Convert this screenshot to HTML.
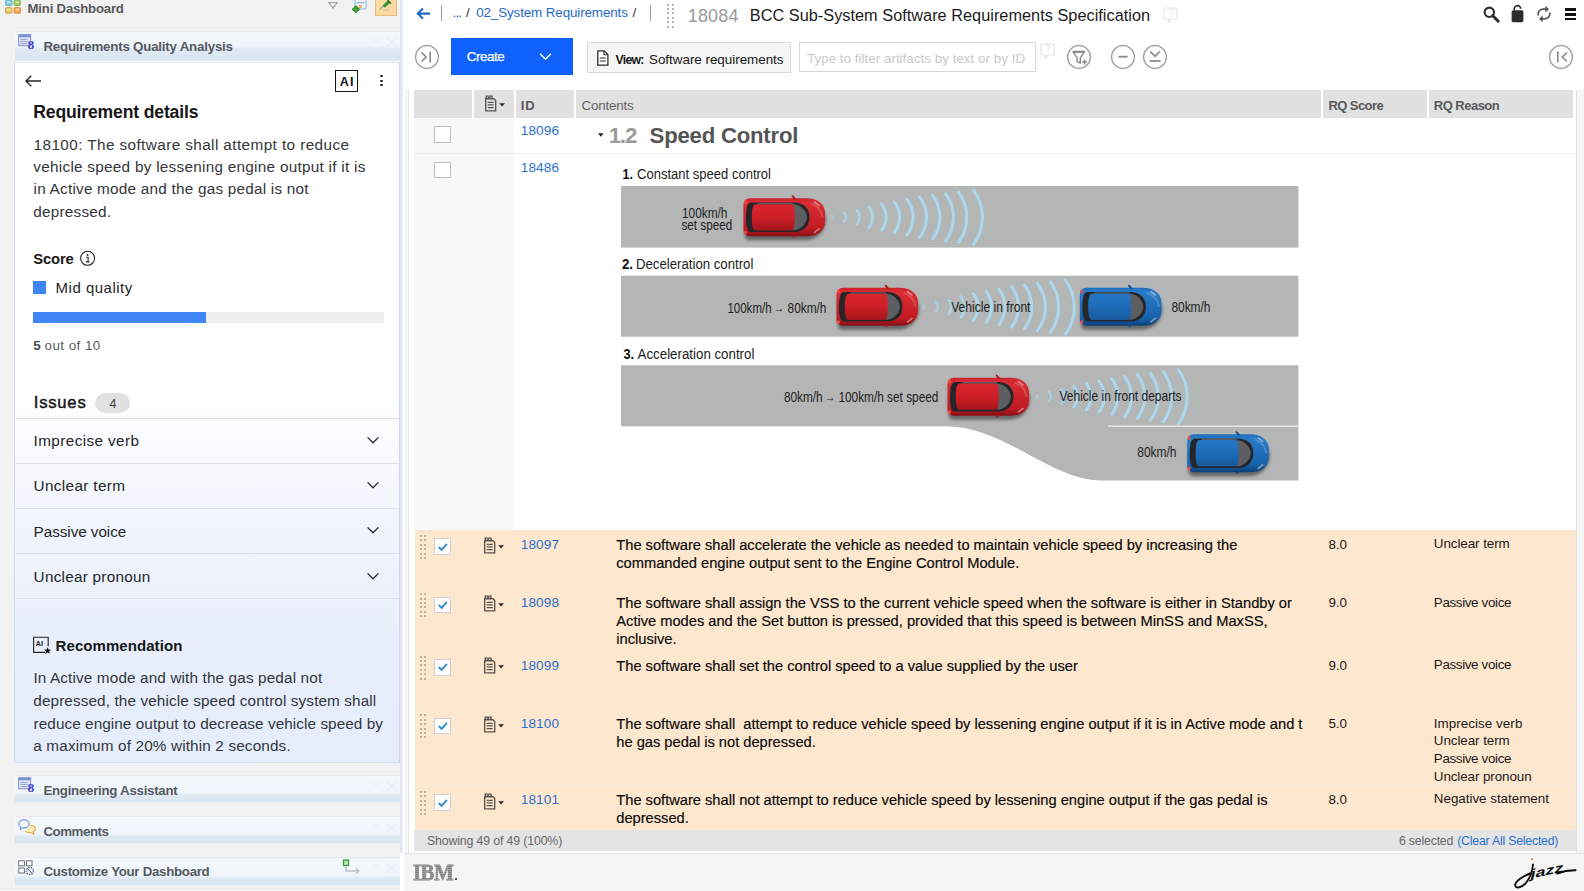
<!DOCTYPE html>
<html lang="en">
<head>
<meta charset="utf-8">
<title>BCC Sub-System Software Requirements Specification</title>
<style>
*{box-sizing:border-box;margin:0;padding:0}
html,body{width:1584px;height:891px;overflow:hidden;background:#fff;font-family:"Liberation Sans",sans-serif;color:#222}
body{position:relative}
.abs{position:absolute}
.t{position:absolute;white-space:pre;line-height:1}
svg{overflow:visible}
#left{position:absolute;left:0;top:0;width:399.600px;height:891px;background:#f2f2f2}
#split{position:absolute;left:399.600px;top:0;width:3.200px;height:853px;background:linear-gradient(90deg,#dbe4f3,#e9eef7)}
.whdr{position:absolute;left:14.500px;width:385.100px;background:linear-gradient(#f3f8fc 0%,#eff5fb 52%,#dfeaf5 60%,#dae6f2 100%);border-top:1px solid #e6eaef;border-bottom:1px solid #e9eef3}
#panel{position:absolute;left:14px;top:62px;width:385.600px;height:700.500px;background:linear-gradient(#fff 0%,#fff 48%,#f3f6fd 62%,#e9effc 82%,#e5ecfb 100%);border:1.100px solid #c9d9f6;border-top:1.500px solid #dfe8f5;border-bottom-color:#d3dff3}
</style>
</head>
<body>
<div id="left"></div>
<div id="split"></div>
<svg class="abs" style="left:5px;top:0px" width="17" height="15" viewBox="0 0 17 15"><rect x="0.5" y="0" width="6.5" height="5.5" rx="1.2" fill="#7cc7d8" stroke="#5fb0c4" stroke-width=".8"/><rect x="9" y="0" width="6.5" height="5.5" rx="1.2" fill="#9ccc5a" stroke="#7fb544" stroke-width=".8"/><rect x="0.5" y="7.5" width="6.5" height="5.8" rx="1.2" fill="#e6c25a" stroke="#cfa53c" stroke-width=".8"/><rect x="9" y="7.5" width="6.5" height="5.8" rx="1.2" fill="#f2a24e" stroke="#de8a35" stroke-width=".8"/><rect x="2" y="1.2" width="3.5" height="2" fill="#fff" opacity=".55"/><rect x="10.5" y="1.2" width="3.5" height="2" fill="#fff" opacity=".55"/><rect x="2" y="8.8" width="3.5" height="2" fill="#fff" opacity=".55"/><rect x="10.5" y="8.8" width="3.5" height="2" fill="#fff" opacity=".55"/></svg>
<div class="t" style="left:27.50px;top:2px;font-size:13.2px;letter-spacing:-0.193px;color:#58595b;font-weight:bold;">Mini Dashboard</div>
<svg class="abs" style="left:326px;top:0" width="16" height="12" viewBox="0 0 16 12"><path d="M2.600 2.700h8.800l-4.400 5.300z" fill="#fafafa" stroke="#a6a6a6" stroke-width="1.250" stroke-linejoin="round"/></svg>
<svg class="abs" style="left:350px;top:0" width="18" height="14" viewBox="0 0 18 14"><rect x="5" y="-2" width="11" height="11" rx="1" fill="#eef4fb" stroke="#8fb0dc" stroke-width="1"/><rect x="6.5" y="2" width="8" height="1.2" fill="#9bb8e0"/><rect x="9" y="5" width="3" height="3" fill="#f0b060"/><path d="M5.900 7.300v4M3.900 9.300h4" stroke="#2f7d22" stroke-width="3.500" stroke-linecap="round"/><path d="M5.900 7.400v3.800M4 9.300h3.800" stroke="#46a632" stroke-width="2.200" stroke-linecap="round"/></svg>
<div class="abs" style="left:375px;top:-1px;width:22px;height:17px;background:#fbd9a0;border:1px solid #e9bd7a"></div>
<svg class="abs" style="left:377px;top:0" width="18" height="14" viewBox="0 0 18 14"><path d="M2.5 9.5l4-3.2" stroke="#9aa" stroke-width="1.2"/><path d="M5.5 5.5l5.5-5 2 2.2-5.2 5z" fill="#3a8f3a"/><path d="M10.5 .2l3.3 3.4" stroke="#2f7a2f" stroke-width="2"/><path d="M6 10.5c2-1 4-1 6 0" stroke="#b9b9b9" stroke-width="1" fill="none"/></svg>
<div class="whdr" style="top:30.5px;height:30px;background:linear-gradient(#f3f8fc 0%,#eff5fb 52%,#dfe9f4 60%,#dae6f2 100%)"></div>
<div class="t" style="left:43.40px;top:40px;font-size:13.3px;letter-spacing:-0.206px;color:#555a60;font-weight:bold;">Requirements Quality Analysis</div>
<svg class="abs" style="left:18px;top:34px" width="18" height="17" viewBox="0 0 18 17"><rect x=".7" y=".7" width="12" height="11" fill="#dfe6f7" stroke="#7d90cf" stroke-width="1"/><rect x=".7" y=".7" width="12" height="2.6" fill="#7d90cf"/><path d="M2.5 5.6h7M2.5 7.6h7M2.5 9.6h7" stroke="#8c9bd2" stroke-width=".9"/><text x="9.6" y="14.6" font-family="Liberation Serif,serif" font-size="13.5" font-weight="bold" fill="#4848cc">8</text></svg>
<svg class="abs" style="left:370px;top:35.5px;opacity:.55" width="28" height="14" viewBox="0 0 28 14"><path d="M2 3h8l-4 4z" fill="#e9eef5"/><path d="M17 2l9 9M26 2l-9 9" stroke="#e6ebf2" stroke-width="2.2"/></svg>
<div id="panel"></div>
<svg class="abs" style="left:24px;top:74px" width="19" height="14" viewBox="0 0 19 14"><path d="M17 7H2.2M7.2 1.8L2 7l5.2 5.2" fill="none" stroke="#262626" stroke-width="1.35" stroke-linejoin="miter"/></svg>
<div class="abs" style="left:335px;top:70px;width:23px;height:22px;border:1.3px solid #161616;background:#fff"></div>
<div class="t" style="left:339.80px;top:76px;font-size:12.6px;letter-spacing:1.200px;color:#161616;font-weight:bold;">AI</div>
<div class="abs" style="left:380.4px;top:74.9px;width:2.4px;height:2.4px;border-radius:50%;background:#262626"></div>
<div class="abs" style="left:380.4px;top:79.5px;width:2.4px;height:2.4px;border-radius:50%;background:#262626"></div>
<div class="abs" style="left:380.4px;top:84.1px;width:2.4px;height:2.4px;border-radius:50%;background:#262626"></div>
<div class="t" style="left:33.30px;top:104px;font-size:17.6px;letter-spacing:-0.168px;color:#161616;font-weight:bold;">Requirement details</div>
<div class="t" style="left:33.60px;top:137px;font-size:15.3px;letter-spacing:0.409px;color:#33363a;">18100: The software shall attempt to reduce</div>
<div class="t" style="left:33.30px;top:159px;font-size:15.3px;letter-spacing:0.274px;color:#33363a;">vehicle speed by lessening engine output if it is</div>
<div class="t" style="left:33.60px;top:181px;font-size:15.3px;letter-spacing:0.231px;color:#33363a;">in Active mode and the gas pedal is not</div>
<div class="t" style="left:33.30px;top:204px;font-size:15.3px;letter-spacing:0.222px;color:#33363a;">depressed.</div>
<div class="t" style="left:33.30px;top:252px;font-size:14.8px;letter-spacing:-0.182px;color:#161616;font-weight:bold;">Score</div>
<svg class="abs" style="left:79px;top:250px" width="17" height="17" viewBox="0 0 17 17"><circle cx="8.6" cy="8.3" r="7" fill="none" stroke="#262626" stroke-width="1.1"/><circle cx="8.6" cy="5" r=".95" fill="#262626"/><path d="M7.2 7.3h1.9v4.6M6.9 11.9h3.6" fill="none" stroke="#262626" stroke-width="1.1"/></svg>
<div class="abs" style="left:33px;top:281px;width:13.2px;height:13.2px;background:#3f86f4;"></div>
<div class="t" style="left:55.60px;top:280px;font-size:15px;letter-spacing:0.500px;color:#262626;">Mid quality</div>
<div class="abs" style="left:33px;top:312.2px;width:351px;height:10.4px;background:#f0f0f0;"></div>
<div class="abs" style="left:33px;top:312.2px;width:173px;height:10.4px;background:#3f86f4;"></div>
<div class="t" style="left:33.30px;top:339px;font-size:13.4px;letter-spacing:0.000px;color:#4a4d50;font-weight:bold;">5</div>
<div class="t" style="left:44.60px;top:339px;font-size:13.4px;letter-spacing:0.443px;color:#5a5d60;">out of 10</div>
<div class="t" style="left:33.80px;top:395px;font-size:16.6px;letter-spacing:0.785px;color:#161616;-webkit-text-stroke:.45px #161616;">Issues</div>
<div class="abs" style="left:95.2px;top:393.2px;width:34.8px;height:19.8px;background:#e1e1e1;border-radius:10px"></div>
<div class="t" style="left:109.60px;top:398px;font-size:12.4px;letter-spacing:0.000px;color:#3a3a3a;">4</div>
<div class="abs" style="left:16px;top:417.7px;width:383px;height:1px;background:#dce2ec"></div>
<div class="t" style="left:33.60px;top:433px;font-size:15.3px;letter-spacing:0.389px;color:#262626;">Imprecise verb</div>
<svg class="abs" style="left:366px;top:436.0px" width="14" height="9" viewBox="0 0 14 9"><path d="M1.6 1.4L7 6.8l5.4-5.4" fill="none" stroke="#262626" stroke-width="1.25"/></svg>
<div class="abs" style="left:16px;top:462.8px;width:383px;height:1px;background:#dce2ec"></div>
<div class="t" style="left:33.60px;top:478px;font-size:15.3px;letter-spacing:0.348px;color:#262626;">Unclear term</div>
<svg class="abs" style="left:366px;top:481.1px" width="14" height="9" viewBox="0 0 14 9"><path d="M1.6 1.4L7 6.8l5.4-5.4" fill="none" stroke="#262626" stroke-width="1.25"/></svg>
<div class="abs" style="left:16px;top:507.9px;width:383px;height:1px;background:#dce2ec"></div>
<div class="t" style="left:33.60px;top:524px;font-size:15.3px;letter-spacing:-0.070px;color:#262626;">Passive voice</div>
<svg class="abs" style="left:366px;top:526.3px" width="14" height="9" viewBox="0 0 14 9"><path d="M1.6 1.4L7 6.8l5.4-5.4" fill="none" stroke="#262626" stroke-width="1.25"/></svg>
<div class="abs" style="left:16px;top:553.0px;width:383px;height:1px;background:#dce2ec"></div>
<div class="t" style="left:33.60px;top:569px;font-size:15.3px;letter-spacing:0.255px;color:#262626;">Unclear pronoun</div>
<svg class="abs" style="left:366px;top:571.5px" width="14" height="9" viewBox="0 0 14 9"><path d="M1.6 1.4L7 6.8l5.4-5.4" fill="none" stroke="#262626" stroke-width="1.25"/></svg>
<div class="abs" style="left:16px;top:598.3px;width:383px;height:1px;background:#dce2ec"></div>
<svg class="abs" style="left:32px;top:635px" width="20" height="20" viewBox="0 0 20 20"><path d="M13.2 17.4H1.6V2.2h14.6v9" fill="none" stroke="#262626" stroke-width="1.15"/><text x="3.6" y="11.2" font-family="Liberation Sans,sans-serif" font-weight="bold" font-size="7.6" fill="#262626">AI</text><path d="M15.6 12.2l1 2.3 2.5.2-1.9 1.6.6 2.4-2.2-1.3-2.2 1.3.6-2.4-1.9-1.6 2.5-.2z" fill="#161616"/></svg>
<div class="t" style="left:55.60px;top:638px;font-size:15px;letter-spacing:0.065px;color:#161616;font-weight:bold;">Recommendation</div>
<div class="t" style="left:33.40px;top:670px;font-size:15.3px;letter-spacing:0.139px;color:#33363a;">In Active mode and with the gas pedal not</div>
<div class="t" style="left:33.30px;top:693px;font-size:15.3px;letter-spacing:0.112px;color:#33363a;">depressed, the vehicle speed control system shall</div>
<div class="t" style="left:33.60px;top:716px;font-size:15.3px;letter-spacing:0.067px;color:#33363a;">reduce engine output to decrease vehicle speed by</div>
<div class="t" style="left:33.30px;top:738px;font-size:15.3px;letter-spacing:0.147px;color:#33363a;">a maximum of 20% within 2 seconds.</div>
<div class="whdr" style="top:775.4px;height:27.5px;background:linear-gradient(#f3f8fc 0%,#eff5fb 66%,#dfe9f4 74%,#dae6f2 100%)"></div>
<div class="t" style="left:43.40px;top:784px;font-size:13.3px;letter-spacing:-0.276px;color:#555a60;font-weight:bold;">Engineering Assistant</div>
<svg class="abs" style="left:18px;top:777px" width="18" height="17" viewBox="0 0 18 17"><rect x=".7" y=".7" width="12" height="11" fill="#dfe6f7" stroke="#7d90cf" stroke-width="1"/><rect x=".7" y=".7" width="12" height="2.6" fill="#7d90cf"/><path d="M2.5 5.6h7M2.5 7.6h7M2.5 9.6h7" stroke="#8c9bd2" stroke-width=".9"/><text x="9.6" y="14.6" font-family="Liberation Serif,serif" font-size="13.5" font-weight="bold" fill="#4848cc">8</text></svg>
<svg class="abs" style="left:370px;top:780.4px;opacity:.55" width="28" height="14" viewBox="0 0 28 14"><path d="M2 3h8l-4 4z" fill="#e9eef5"/><path d="M17 2l9 9M26 2l-9 9" stroke="#e6ebf2" stroke-width="2.2"/></svg>
<div class="whdr" style="top:816.3px;height:27.5px;background:linear-gradient(#f3f8fc 0%,#eff5fb 66%,#dfe9f4 74%,#dae6f2 100%)"></div>
<div class="t" style="left:43.40px;top:825px;font-size:13.3px;letter-spacing:-0.448px;color:#555a60;font-weight:bold;">Comments</div>
<svg class="abs" style="left:18px;top:819px" width="19" height="17" viewBox="0 0 19 17"><path d="M6 .8c3 0 5.2 1.8 5.2 4.1S9 9 6 9c-.5 0-1 0-1.400-.1L2.400 10.600l.5-2.400C1.500 7.400.8 6.200.8 4.900.8 2.600 3 .8 6 .8z" fill="#f4f8ff" stroke="#5b7fc4" stroke-width="1"/><path d="M12.300 6.300c2.800.2 5 1.700 5 3.700 0 1.200-.8 2.200-2 2.900l.4 2.200-2.300-1.500c-.5.100-1 .1-1.500.1-1.900 0-3.500-.7-4.400-1.700" fill="#fbecb8" stroke="#e0a83a" stroke-width="1.1"/></svg>
<svg class="abs" style="left:370px;top:821.3px;opacity:.55" width="28" height="14" viewBox="0 0 28 14"><path d="M2 3h8l-4 4z" fill="#e9eef5"/><path d="M17 2l9 9M26 2l-9 9" stroke="#e6ebf2" stroke-width="2.2"/></svg>
<div class="whdr" style="top:856.7px;height:29px;background:linear-gradient(#f3f8fc 0%,#eff5fb 66%,#dfe9f4 74%,#dae6f2 100%)"></div>
<div class="t" style="left:43.40px;top:865px;font-size:13.3px;letter-spacing:-0.295px;color:#555a60;font-weight:bold;">Customize Your Dashboard</div>
<svg class="abs" style="left:18px;top:860px" width="19" height="17" viewBox="0 0 19 17"><rect x=".8" y=".8" width="5.600" height="5" fill="#fff" stroke="#6a7078" stroke-width="1"/><rect x="8.400" y=".8" width="5.600" height="5" fill="#fff" stroke="#6a7078" stroke-width="1"/><rect x=".8" y="8" width="5.600" height="5" fill="#fff" stroke="#6a7078" stroke-width="1"/><circle cx="11.800" cy="11" r="3.600" fill="#e8ecf4" stroke="#4a5a8a" stroke-width="1.100" stroke-dasharray="1.5 1"/><path d="M9.500 8.700l4.600 4.600" stroke="#4a5a8a" stroke-width="1"/></svg>
<svg class="abs" style="left:370px;top:861.7px;opacity:.55" width="28" height="14" viewBox="0 0 28 14"><path d="M2 3h8l-4 4z" fill="#e9eef5"/><path d="M17 2l9 9M26 2l-9 9" stroke="#e6ebf2" stroke-width="2.2"/></svg>
<svg class="abs" style="left:342px;top:859px" width="20" height="16" viewBox="0 0 20 16"><rect x="1.500" y="1" width="5" height="5.500" fill="#bfe3bf" stroke="#3d9b4a" stroke-width="1.300"/><path d="M4 7.500v4.500h12" fill="none" stroke="#b9bec6" stroke-width="1.400"/><path d="M14 9.500l3 2.500-3 2.500" fill="none" stroke="#b9bec6" stroke-width="1.200"/></svg>
<div class="abs" style="left:0px;top:888px;width:399.6px;height:3px;background:linear-gradient(#e8e8e8,#fafafa);"></div>
<svg class="abs" style="left:415px;top:6px" width="17" height="15" viewBox="0 0 17 15"><path d="M15 7.600H3.200M8 2.400L2.800 7.600 8 12.800" fill="none" stroke="#1f69c9" stroke-width="2.100"/></svg>
<div class="abs" style="left:441.2px;top:5px;width:1.2px;height:16px;background:#9a9a9a;"></div>
<div class="t" style="left:452.60px;top:6px;font-size:13.4px;letter-spacing:-0.881px;color:#1f69c9;">...</div>
<div class="t" style="left:466.00px;top:6px;font-size:13.4px;letter-spacing:0.000px;color:#333;">/</div>
<div class="t" style="left:476.20px;top:6px;font-size:13.4px;letter-spacing:-0.113px;color:#1f69c9;">02_System Requirements</div>
<div class="t" style="left:632.60px;top:6px;font-size:13.4px;letter-spacing:0.000px;color:#333;">/</div>
<div class="abs" style="left:650px;top:5px;width:1.2px;height:16px;background:#9a9a9a;"></div>
<div class="abs" style="left:667px;top:4px;width:2.2px;height:2.2px;background:#a4a598;border-radius:.8px"></div>
<div class="abs" style="left:671.7px;top:4px;width:2.2px;height:2.2px;background:#a4a598;border-radius:.8px"></div>
<div class="abs" style="left:667px;top:8px;width:2.2px;height:2.2px;background:#a4a598;border-radius:.8px"></div>
<div class="abs" style="left:671.7px;top:8px;width:2.2px;height:2.2px;background:#a4a598;border-radius:.8px"></div>
<div class="abs" style="left:667px;top:12px;width:2.2px;height:2.2px;background:#a4a598;border-radius:.8px"></div>
<div class="abs" style="left:671.7px;top:12px;width:2.2px;height:2.2px;background:#a4a598;border-radius:.8px"></div>
<div class="abs" style="left:667px;top:17px;width:2.2px;height:2.2px;background:#a4a598;border-radius:.8px"></div>
<div class="abs" style="left:671.7px;top:17px;width:2.2px;height:2.2px;background:#a4a598;border-radius:.8px"></div>
<div class="abs" style="left:667px;top:21px;width:2.2px;height:2.2px;background:#a4a598;border-radius:.8px"></div>
<div class="abs" style="left:671.7px;top:21px;width:2.2px;height:2.2px;background:#a4a598;border-radius:.8px"></div>
<div class="abs" style="left:667px;top:26px;width:2.2px;height:2.2px;background:#a4a598;border-radius:.8px"></div>
<div class="abs" style="left:671.7px;top:26px;width:2.2px;height:2.2px;background:#a4a598;border-radius:.8px"></div>
<div class="t" style="left:687.80px;top:7px;font-size:18px;letter-spacing:0.136px;color:#9a9a9a;">18084</div>
<div class="t" style="left:749.80px;top:7px;font-size:16.3px;letter-spacing:0.024px;color:#1c1c1c;">BCC Sub-System Software Requirements Specification</div>
<svg class="abs" style="left:1162px;top:6px;opacity:.5" width="18" height="19" viewBox="0 0 18 19"><path d="M2 2h13v11H9l-2.500 3v-3H2z" fill="none" stroke="#d0d0d0" stroke-width="1.200"/><text x="6" y="11" font-family="Liberation Sans,sans-serif" font-size="10.5" fill="#cdcdcd">?</text></svg>
<svg class="abs" style="left:1482px;top:5px" width="19" height="19" viewBox="0 0 19 19"><circle cx="7.300" cy="7.300" r="4.700" fill="none" stroke="#2c2c2c" stroke-width="2.100"/><path d="M10.800 10.800l5.400 5.400" stroke="#2c2c2c" stroke-width="3" stroke-linecap="round"/></svg>
<svg class="abs" style="left:1509px;top:4px" width="17" height="20" viewBox="0 0 17 20"><path d="M5.200 6.500V5.200a3.300 3.300 0 0 1 6.600-.4" fill="none" stroke="#2c2c2c" stroke-width="1.700"/><rect x="2.600" y="6.300" width="11.800" height="11.900" rx="1.800" fill="#2c2c2c"/></svg>
<svg class="abs" style="left:1535px;top:4px" width="18" height="20" viewBox="0 0 18 20"><path d="M3.300 11.500c-.8-3.600 1.500-6.300 5-6.300h3.500" fill="none" stroke="#555" stroke-width="1.700"/><path d="M10.300 1.800l3.700 3.400-3.700 3.400z" fill="#555"/><path d="M14.700 8.500c.8 3.600-1.500 6.300-5 6.300H6.200" fill="none" stroke="#555" stroke-width="1.700"/><path d="M7.700 18.200L4 14.800l3.700-3.400z" fill="#555"/></svg>
<div class="abs" style="left:1564.5px;top:8.3px;width:11.8px;height:2.5px;background:#111;"></div>
<div class="abs" style="left:1564.5px;top:13.1px;width:11.8px;height:2.5px;background:#111;"></div>
<div class="abs" style="left:1564.5px;top:17.9px;width:11.8px;height:2.5px;background:#111;"></div>
<svg class="abs" style="left:412.8px;top:42.6px" width="28" height="28" viewBox="-14 -14 28 28"><circle r="11.4" fill="#fff" stroke="#a4a4a4" stroke-width="1.500"/><path d="M-5.500 -4.500L-.8 0l-4.700 4.500" fill="none" stroke="#8a8a8a" stroke-width="1.700"/><path d="M3.200 -5.500v11" stroke="#8a8a8a" stroke-width="1.700"/></svg>
<div class="abs" style="left:451px;top:38.1px;width:121.5px;height:37px;background:#0f62fe;"></div>
<div class="t" style="left:466.80px;top:50px;font-size:13.4px;letter-spacing:-0.483px;color:#fff;-webkit-text-stroke:.25px #fff;">Create</div>
<svg class="abs" style="left:538px;top:52px" width="15" height="10" viewBox="0 0 15 10"><path d="M2 1.800l5.500 5.500L13 1.800" fill="none" stroke="#fff" stroke-width="1.400"/></svg>
<div class="abs" style="left:587px;top:42.400px;width:204px;height:30.500px;background:#f5f5f5;border:1px solid #d9d9d9"></div>
<svg class="abs" style="left:596px;top:49px" width="14" height="18" viewBox="0 0 14 18"><path d="M1.800 1.800h6.400l3.700 3.700v10.600H1.800z" fill="#fff" stroke="#2a2a2a" stroke-width="1.250"/><path d="M8 2v3.800h3.700" fill="none" stroke="#2a2a2a" stroke-width="1.100"/><path d="M3.800 9h6M3.800 12h6" stroke="#2a2a2a" stroke-width="1.100"/></svg>
<div class="t" style="left:615.60px;top:54px;font-size:12.2px;letter-spacing:-0.712px;color:#161616;font-weight:bold;">View:</div>
<div class="t" style="left:649.00px;top:53px;font-size:13.4px;letter-spacing:-0.010px;color:#161616;">Software requirements</div>
<div class="abs" style="left:799px;top:42.400px;width:237px;height:29.600px;background:#fff;border:1px solid #d6d6d6"></div>
<div class="t" style="left:807.00px;top:52px;font-size:13.4px;letter-spacing:0.019px;color:#c9c9c9;">Type to filter artifacts by text or by ID</div>
<svg class="abs" style="left:1039px;top:42px;opacity:.6" width="18" height="19" viewBox="0 0 18 19"><path d="M2 2h13v11H9l-2.500 3v-3H2z" fill="none" stroke="#d0d0d0" stroke-width="1.200"/><text x="6" y="11" font-family="Liberation Sans,sans-serif" font-size="10.5" fill="#cdcdcd">?</text></svg>
<svg class="abs" style="left:1065px;top:42.6px" width="28" height="28" viewBox="-14 -14 28 28"><circle r="11.4" fill="#fff" stroke="#a4a4a4" stroke-width="1.500"/><path d="M-6 -5.200h11.500L1.300 .8v5.400l-3.200-1.600V.8z" fill="none" stroke="#8a8a8a" stroke-width="1.400" stroke-linejoin="round"/><path d="M-6 -5.200h11.500" stroke="#8a8a8a" stroke-width="2.200"/><path d="M5.600 2.600v5M3.100 5.100h5" stroke="#8a8a8a" stroke-width="1.500"/></svg>
<svg class="abs" style="left:1108.7px;top:42.6px" width="28" height="28" viewBox="-14 -14 28 28"><circle r="11.4" fill="#fff" stroke="#a4a4a4" stroke-width="1.500"/><path d="M-4.500 -.3h9" stroke="#8a8a8a" stroke-width="1.800"/></svg>
<svg class="abs" style="left:1140.7px;top:42.6px" width="28" height="28" viewBox="-14 -14 28 28"><circle r="11.4" fill="#fff" stroke="#a4a4a4" stroke-width="1.500"/><path d="M-4.800 -5.500L0 -.8l4.800-4.700" fill="none" stroke="#8a8a8a" stroke-width="1.700"/><path d="M-5.500 4h11" stroke="#8a8a8a" stroke-width="1.700"/></svg>
<svg class="abs" style="left:1546.8px;top:42.6px" width="28" height="28" viewBox="-14 -14 28 28"><circle r="11.4" fill="#fff" stroke="#a4a4a4" stroke-width="1.500"/><path d="M6 -4.500L1.300 0 6 4.500" fill="none" stroke="#8a8a8a" stroke-width="1.700"/><path d="M-3.200 -5.500v11" stroke="#8a8a8a" stroke-width="1.700"/></svg>
<div class="abs" style="left:414px;top:89.6px;width:58px;height:28.2px;background:#e1e1e1;"></div>
<div class="abs" style="left:474px;top:89.6px;width:39.7px;height:28.2px;background:#e1e1e1;"></div>
<div class="abs" style="left:516px;top:89.6px;width:57.8px;height:28.2px;background:#e1e1e1;"></div>
<div class="abs" style="left:576.3px;top:89.6px;width:744.7px;height:28.2px;background:#e1e1e1;"></div>
<div class="abs" style="left:1323px;top:89.6px;width:103.7px;height:28.2px;background:#e1e1e1;"></div>
<div class="abs" style="left:1428.8px;top:89.6px;width:144.2px;height:28.2px;background:#e1e1e1;"></div>
<svg class="abs" style="left:483.5px;top:95.3px" width="24" height="18" viewBox="0 0 24 18"><path d="M2.200 3.700V1.100h5.800v2.600" fill="none" stroke="#555" stroke-width="1.350"/><path d="M3.900 2.600h2.400" stroke="#555" stroke-width="1.100"/><path d="M1.700 3.700h8.200l1.800 1.800v10.300H1.700z" fill="none" stroke="#555" stroke-width="1.350"/><path d="M3.700 7.300h6M3.700 9.900h6M3.700 12.500h6" stroke="#555" stroke-width="1.250"/><path d="M15.200 8.300h5.800l-2.900 3.100z" fill="#2b2b2b"/></svg>
<div class="t" style="left:520.80px;top:99px;font-size:13px;letter-spacing:0.800px;color:#56585b;font-weight:bold;">ID</div>
<div class="t" style="left:581.40px;top:99px;font-size:13.4px;letter-spacing:-0.175px;color:#666;">Contents</div>
<div class="t" style="left:1328.40px;top:99px;font-size:13px;letter-spacing:-0.563px;color:#56585b;font-weight:bold;">RQ Score</div>
<div class="t" style="left:1433.80px;top:99px;font-size:13px;letter-spacing:-0.521px;color:#56585b;font-weight:bold;">RQ Reason</div>
<div class="abs" style="left:404px;top:89.6px;width:5.4px;height:763px;background:#f7f7f7;border-right:1px solid #e4e4e4"></div>
<div class="abs" style="left:1575.5px;top:90px;width:8.5px;height:763px;background:#f4f4f4;border-left:1px solid #e2e2e2"></div>
<div class="abs" style="left:414px;top:118px;width:100px;height:412px;background:#f8f8f8;"></div>
<div class="abs" style="left:414px;top:153px;width:1161px;height:1.2px;background:#ececec;"></div>
<div class="abs" style="left:434.300px;top:125.8px;width:16.800px;height:16.800px;background:#fff;border:1.200px solid #bdbdbd"></div>
<div class="abs" style="left:434.300px;top:161.6px;width:16.800px;height:16.800px;background:#fff;border:1.200px solid #bdbdbd"></div>
<div class="t" style="left:520.80px;top:124px;font-size:13.6px;letter-spacing:0.095px;color:#2b6fd0;">18096</div>
<div class="t" style="left:520.80px;top:161px;font-size:13.6px;letter-spacing:0.095px;color:#2b6fd0;">18486</div>
<svg class="abs" style="left:597px;top:132px" width="8" height="6" viewBox="0 0 8 6"><path d="M1 1.300h5.600L3.800 4.800z" fill="#222"/></svg>
<div class="t" style="left:608.80px;top:125px;font-size:22.2px;letter-spacing:-1.129px;color:#9a9a9a;font-weight:bold;">1.2</div>
<div class="t" style="left:649.60px;top:125px;font-size:22.2px;letter-spacing:-0.235px;color:#555;font-weight:bold;">Speed Control</div>
<svg class="abs" style="left:600px;top:155px" width="720" height="340" viewBox="600 155 720 340" font-family="Liberation Sans,sans-serif"><defs><filter id="sh" x="-20%" y="-20%" width="140%" height="150%"><feGaussianBlur stdDeviation="1.600"/></filter><linearGradient id="gr" x1="0" y1="0" x2="0" y2="1"><stop offset="0" stop-color="#cb232b"/><stop offset=".12" stop-color="#da2c34"/><stop offset=".8" stop-color="#c11b23"/><stop offset="1" stop-color="#861015"/></linearGradient><linearGradient id="grr" x1="0" y1="0" x2="0" y2="1"><stop offset="0" stop-color="#db252d"/><stop offset=".5" stop-color="#cd1e26"/><stop offset="1" stop-color="#a5161c"/></linearGradient><linearGradient id="gb" x1="0" y1="0" x2="0" y2="1"><stop offset="0" stop-color="#1f6fbb"/><stop offset=".12" stop-color="#2a7ccb"/><stop offset=".8" stop-color="#1862ab"/><stop offset="1" stop-color="#0c3f78"/></linearGradient><linearGradient id="gbr" x1="0" y1="0" x2="0" y2="1"><stop offset="0" stop-color="#2577c6"/><stop offset=".5" stop-color="#1d6bb8"/><stop offset="1" stop-color="#175a9f"/></linearGradient></defs><rect x="621" y="186" width="677.400" height="61.600" fill="#b4b5b5"/><rect x="621" y="275.700" width="677.400" height="61" fill="#b4b5b5"/><path d="M621 365.200H1298.400V480.600H1102C1050 480.600 1005 426.200 945 426.200H621z" fill="#b4b5b5"/><path d="M1108 426.200H1298.400" stroke="#f2f2f2" stroke-width="1.300"/><text x="622.6" y="179.0" font-size="15.2" textLength="10.4" lengthAdjust="spacingAndGlyphs" fill="#111" font-weight="bold">1.</text><text x="637.0" y="179.0" font-size="15.2" textLength="134.0" lengthAdjust="spacingAndGlyphs" fill="#1d1d1d">Constant speed control</text><text x="621.9" y="269.0" font-size="15.2" textLength="11.1" lengthAdjust="spacingAndGlyphs" fill="#111" font-weight="bold">2.</text><text x="636.0" y="269.0" font-size="15.2" textLength="117.4" lengthAdjust="spacingAndGlyphs" fill="#1d1d1d">Deceleration control</text><text x="623.4" y="359.0" font-size="15.2" textLength="10.6" lengthAdjust="spacingAndGlyphs" fill="#111" font-weight="bold">3.</text><text x="637.6" y="359.0" font-size="15.2" textLength="116.8" lengthAdjust="spacingAndGlyphs" fill="#1d1d1d">Acceleration control</text><text x="682.0" y="218.0" font-size="14.3" textLength="45.4" lengthAdjust="spacingAndGlyphs" fill="#1d1d1d">100km/h</text><text x="681.5" y="230.2" font-size="14.3" textLength="50.7" lengthAdjust="spacingAndGlyphs" fill="#1d1d1d">set speed</text><path d="M831.7 215.4A2.0 2.0 0 0 1 831.7 218.9" fill="none" stroke="#a9ddf8" stroke-width="2.2" stroke-linecap="round" opacity="0.45"/><path d="M844.1 212.5A6.5 6.5 0 0 1 844.1 221.8" fill="none" stroke="#a9ddf8" stroke-width="2.5" stroke-linecap="round" opacity="0.60"/><path d="M856.7 210.1A10.7 10.7 0 0 1 856.7 224.3" fill="none" stroke="#a9ddf8" stroke-width="2.7" stroke-linecap="round" opacity="0.72"/><path d="M868.9 206.8A16.4 16.4 0 0 1 868.9 227.6" fill="none" stroke="#a9ddf8" stroke-width="3.0" stroke-linecap="round" opacity="0.80"/><path d="M881.5 203.9A21.4 21.4 0 0 1 881.5 230.4" fill="none" stroke="#a9ddf8" stroke-width="3.0" stroke-linecap="round" opacity="0.86"/><path d="M894.3 201.9A24.9 24.9 0 0 1 894.3 232.5" fill="none" stroke="#a9ddf8" stroke-width="3.0" stroke-linecap="round" opacity="0.86"/><path d="M907.0 199.4A29.3 29.3 0 0 1 907.0 235.0" fill="none" stroke="#a9ddf8" stroke-width="3.0" stroke-linecap="round" opacity="0.86"/><path d="M919.7 196.9A33.6 33.6 0 0 1 919.7 237.4" fill="none" stroke="#a9ddf8" stroke-width="3.0" stroke-linecap="round" opacity="0.86"/><path d="M932.6 195.3A36.5 36.5 0 0 1 932.6 239.1" fill="none" stroke="#a9ddf8" stroke-width="3.0" stroke-linecap="round" opacity="0.86"/><path d="M945.6 193.6A39.4 39.4 0 0 1 945.6 240.8" fill="none" stroke="#a9ddf8" stroke-width="3.0" stroke-linecap="round" opacity="0.86"/><path d="M958.5 192.0A42.3 42.3 0 0 1 958.5 242.3" fill="none" stroke="#a9ddf8" stroke-width="3.0" stroke-linecap="round" opacity="0.86"/><path d="M973.5 190.0A45.9 45.9 0 0 1 973.5 244.4" fill="none" stroke="#a9ddf8" stroke-width="3.0" stroke-linecap="round" opacity="0.86"/><g transform="translate(743.0 197.8)"><path d="M6 5H62C75 5 83 12 83 22S75 42.500 62 42.500H6C2.500 42.500 1.500 39 1.500 36V10C1.500 7 2.500 5 6 5z" fill="#000" opacity=".42" filter="url(#sh)"/><path d="M7 .5H63C75 .5 82 6.500 82 15.500V23.500C82 32.500 75 38.500 63 38.500H7C3 38.500 .5 35.500 .5 32V7C.5 3.500 3 .5 7 .5z" fill="url(#gr)"/><path d="M.8 3.200l2.200-1.600 1 3.400-2.400 1.500zM.8 35.800l2.200 1.600 1-3.400-2.400-1.500z" fill="#e85045"/><path d="M71.500 3.200l5.600 4.600-1.300 1-5.300-4.200zM71.500 35.800l5.600-4.600-1.300-1-5.300 4.200z" fill="#e6e2dc" opacity=".5"/><path d="M8 4.800H51C60 4.800 66.500 10 66.500 19.500S60 34.200 51 34.200H8C4.500 34.200 3 29 3 19.500S4.500 4.800 8 4.800z" fill="#24262a"/><path d="M50 6.300C57 7 63.300 12 64 19.500 63.300 27 57 32 50 32.700z" fill="#5d5e61"/><path d="M16 4.900H49.500L51 6.500H14z" fill="#6a707a" opacity=".75"/><path d="M12.500 6.400H48C50 6.400 51 7.500 51.200 10 52 16 52 23 51.200 29 51 31.500 50 32.600 48 32.600H12.500C10 32.600 8.800 28 8.800 19.500S10 6.400 12.500 6.400z" fill="url(#grr)"/><path d="M50.200 1.200L48.400-2.600l2 .4 3.200 3.800z" fill="#b3181f"/><path d="M50.200 37.800l-1.200 2.200 2.200-.3 1.800-1.900z" fill="#b3181f"/><path d="M68 5.500C75 8.500 79 13.500 79.500 19.500" fill="none" stroke="#fff" stroke-opacity=".16" stroke-width="2.200"/></g><text x="727.4" y="313.0" font-size="14.3" textLength="44.2" lengthAdjust="spacingAndGlyphs" fill="#1d1d1d">100km/h</text><text x="774.0" y="312.3" font-size="12" textLength="10.5" lengthAdjust="spacingAndGlyphs" fill="#1d1d1d" font-weight="bold">→</text><text x="787.6" y="313.0" font-size="14.3" textLength="38.8" lengthAdjust="spacingAndGlyphs" fill="#1d1d1d">80km/h</text><path d="M923.6 305.2A2.0 2.0 0 0 1 923.6 308.8" fill="none" stroke="#a9ddf8" stroke-width="2.2" stroke-linecap="round" opacity="0.45"/><path d="M936.0 302.4A6.5 6.5 0 0 1 936.0 311.6" fill="none" stroke="#a9ddf8" stroke-width="2.5" stroke-linecap="round" opacity="0.60"/><path d="M948.6 299.9A10.7 10.7 0 0 1 948.6 314.1" fill="none" stroke="#a9ddf8" stroke-width="2.7" stroke-linecap="round" opacity="0.72"/><path d="M960.8 296.6A16.4 16.4 0 0 1 960.8 317.4" fill="none" stroke="#a9ddf8" stroke-width="3.0" stroke-linecap="round" opacity="0.80"/><path d="M973.4 293.8A21.4 21.4 0 0 1 973.4 320.2" fill="none" stroke="#a9ddf8" stroke-width="3.0" stroke-linecap="round" opacity="0.86"/><path d="M986.2 291.7A24.9 24.9 0 0 1 986.2 322.3" fill="none" stroke="#a9ddf8" stroke-width="3.0" stroke-linecap="round" opacity="0.86"/><path d="M998.9 289.2A29.3 29.3 0 0 1 998.9 324.8" fill="none" stroke="#a9ddf8" stroke-width="3.0" stroke-linecap="round" opacity="0.86"/><path d="M1011.6 286.8A33.6 33.6 0 0 1 1011.6 327.2" fill="none" stroke="#a9ddf8" stroke-width="3.0" stroke-linecap="round" opacity="0.86"/><path d="M1024.5 285.1A36.5 36.5 0 0 1 1024.5 328.9" fill="none" stroke="#a9ddf8" stroke-width="3.0" stroke-linecap="round" opacity="0.86"/><path d="M1037.5 283.4A39.4 39.4 0 0 1 1037.5 330.6" fill="none" stroke="#a9ddf8" stroke-width="3.0" stroke-linecap="round" opacity="0.86"/><path d="M1050.4 281.9A42.3 42.3 0 0 1 1050.4 332.1" fill="none" stroke="#a9ddf8" stroke-width="3.0" stroke-linecap="round" opacity="0.86"/><path d="M1065.4 279.8A45.9 45.9 0 0 1 1065.4 334.2" fill="none" stroke="#a9ddf8" stroke-width="3.0" stroke-linecap="round" opacity="0.86"/><text x="951.2" y="311.8" font-size="14.3" textLength="79.3" lengthAdjust="spacingAndGlyphs" fill="#1d1d1d">Vehicle in front</text><g transform="translate(836.0 287.3)"><path d="M6 5H62C75 5 83 12 83 22S75 42.500 62 42.500H6C2.500 42.500 1.500 39 1.500 36V10C1.500 7 2.500 5 6 5z" fill="#000" opacity=".42" filter="url(#sh)"/><path d="M7 .5H63C75 .5 82 6.500 82 15.500V23.500C82 32.500 75 38.500 63 38.500H7C3 38.500 .5 35.500 .5 32V7C.5 3.500 3 .5 7 .5z" fill="url(#gr)"/><path d="M.8 3.200l2.200-1.600 1 3.400-2.400 1.500zM.8 35.800l2.200 1.600 1-3.400-2.400-1.500z" fill="#e85045"/><path d="M71.500 3.200l5.600 4.600-1.300 1-5.300-4.200zM71.500 35.800l5.600-4.600-1.300-1-5.300 4.200z" fill="#e6e2dc" opacity=".5"/><path d="M8 4.800H51C60 4.800 66.500 10 66.500 19.500S60 34.200 51 34.200H8C4.500 34.200 3 29 3 19.500S4.500 4.800 8 4.800z" fill="#24262a"/><path d="M50 6.300C57 7 63.300 12 64 19.500 63.300 27 57 32 50 32.700z" fill="#5d5e61"/><path d="M16 4.900H49.500L51 6.500H14z" fill="#6a707a" opacity=".75"/><path d="M12.500 6.400H48C50 6.400 51 7.500 51.200 10 52 16 52 23 51.200 29 51 31.500 50 32.600 48 32.600H12.500C10 32.600 8.800 28 8.800 19.500S10 6.400 12.500 6.400z" fill="url(#grr)"/><path d="M50.200 1.200L48.400-2.600l2 .4 3.200 3.800z" fill="#b3181f"/><path d="M50.200 37.800l-1.200 2.200 2.200-.3 1.800-1.900z" fill="#b3181f"/><path d="M68 5.500C75 8.500 79 13.500 79.500 19.500" fill="none" stroke="#fff" stroke-opacity=".16" stroke-width="2.200"/></g><g transform="translate(1079.4 287.3)"><path d="M6 5H62C75 5 83 12 83 22S75 42.500 62 42.500H6C2.500 42.500 1.500 39 1.500 36V10C1.500 7 2.500 5 6 5z" fill="#000" opacity=".42" filter="url(#sh)"/><path d="M7 .5H63C75 .5 82 6.500 82 15.500V23.500C82 32.500 75 38.500 63 38.500H7C3 38.500 .5 35.500 .5 32V7C.5 3.500 3 .5 7 .5z" fill="url(#gb)"/><path d="M.8 3.200l2.200-1.600 1 3.400-2.400 1.500zM.8 35.800l2.200 1.600 1-3.400-2.400-1.500z" fill="#e85045"/><path d="M71.500 3.200l5.600 4.600-1.300 1-5.300-4.200zM71.500 35.800l5.600-4.600-1.300-1-5.300 4.200z" fill="#e6e2dc" opacity=".5"/><path d="M8 4.800H51C60 4.800 66.500 10 66.500 19.500S60 34.200 51 34.200H8C4.500 34.200 3 29 3 19.500S4.500 4.800 8 4.800z" fill="#24262a"/><path d="M50 6.300C57 7 63.300 12 64 19.500 63.300 27 57 32 50 32.700z" fill="#5d5e61"/><path d="M16 4.900H49.500L51 6.500H14z" fill="#6a707a" opacity=".75"/><path d="M12.500 6.400H48C50 6.400 51 7.500 51.200 10 52 16 52 23 51.200 29 51 31.500 50 32.600 48 32.600H12.500C10 32.600 8.800 28 8.800 19.500S10 6.400 12.500 6.400z" fill="url(#gbr)"/><path d="M50.200 1.200L48.400-2.600l2 .4 3.200 3.800z" fill="#124f92"/><path d="M50.200 37.800l-1.200 2.200 2.200-.3 1.800-1.900z" fill="#124f92"/><path d="M68 5.500C75 8.500 79 13.500 79.500 19.500" fill="none" stroke="#fff" stroke-opacity=".16" stroke-width="2.200"/></g><text x="1171.4" y="311.8" font-size="14.3" textLength="39.1" lengthAdjust="spacingAndGlyphs" fill="#1d1d1d">80km/h</text><text x="784.0" y="402.0" font-size="14.3" textLength="38.6" lengthAdjust="spacingAndGlyphs" fill="#1d1d1d">80km/h</text><text x="825.0" y="401.3" font-size="12" textLength="10.5" lengthAdjust="spacingAndGlyphs" fill="#1d1d1d" font-weight="bold">→</text><text x="838.4" y="402.0" font-size="14.3" textLength="100.0" lengthAdjust="spacingAndGlyphs" fill="#1d1d1d">100km/h set speed</text><path d="M1036.5 394.9A2.0 2.0 0 0 1 1036.5 398.4" fill="none" stroke="#a9ddf8" stroke-width="2.2" stroke-linecap="round" opacity="0.45"/><path d="M1048.9 392.0A6.5 6.5 0 0 1 1048.9 401.2" fill="none" stroke="#a9ddf8" stroke-width="2.5" stroke-linecap="round" opacity="0.60"/><path d="M1061.5 389.5A10.7 10.7 0 0 1 1061.5 403.7" fill="none" stroke="#a9ddf8" stroke-width="2.7" stroke-linecap="round" opacity="0.72"/><path d="M1073.7 386.2A16.4 16.4 0 0 1 1073.7 407.0" fill="none" stroke="#a9ddf8" stroke-width="3.0" stroke-linecap="round" opacity="0.80"/><path d="M1086.3 383.4A21.4 21.4 0 0 1 1086.3 409.9" fill="none" stroke="#a9ddf8" stroke-width="3.0" stroke-linecap="round" opacity="0.86"/><path d="M1099.1 381.3A24.9 24.9 0 0 1 1099.1 411.9" fill="none" stroke="#a9ddf8" stroke-width="3.0" stroke-linecap="round" opacity="0.86"/><path d="M1111.8 378.8A29.3 29.3 0 0 1 1111.8 414.4" fill="none" stroke="#a9ddf8" stroke-width="3.0" stroke-linecap="round" opacity="0.86"/><path d="M1124.5 376.4A33.6 33.6 0 0 1 1124.5 416.9" fill="none" stroke="#a9ddf8" stroke-width="3.0" stroke-linecap="round" opacity="0.86"/><path d="M1137.4 374.7A36.5 36.5 0 0 1 1137.4 418.5" fill="none" stroke="#a9ddf8" stroke-width="3.0" stroke-linecap="round" opacity="0.86"/><path d="M1150.4 373.1A39.4 39.4 0 0 1 1150.4 420.2" fill="none" stroke="#a9ddf8" stroke-width="3.0" stroke-linecap="round" opacity="0.86"/><path d="M1163.3 371.5A42.3 42.3 0 0 1 1163.3 421.8" fill="none" stroke="#a9ddf8" stroke-width="3.0" stroke-linecap="round" opacity="0.86"/><path d="M1178.3 369.4A45.9 45.9 0 0 1 1178.3 423.8" fill="none" stroke="#a9ddf8" stroke-width="3.0" stroke-linecap="round" opacity="0.86"/><text x="1059.5" y="401.4" font-size="14.3" textLength="122.0" lengthAdjust="spacingAndGlyphs" fill="#1d1d1d">Vehicle in front departs</text><g transform="translate(947.0 377.2)"><path d="M6 5H62C75 5 83 12 83 22S75 42.500 62 42.500H6C2.500 42.500 1.500 39 1.500 36V10C1.500 7 2.500 5 6 5z" fill="#000" opacity=".42" filter="url(#sh)"/><path d="M7 .5H63C75 .5 82 6.500 82 15.500V23.500C82 32.500 75 38.500 63 38.500H7C3 38.500 .5 35.500 .5 32V7C.5 3.500 3 .5 7 .5z" fill="url(#gr)"/><path d="M.8 3.200l2.200-1.600 1 3.400-2.400 1.500zM.8 35.800l2.200 1.600 1-3.400-2.400-1.500z" fill="#e85045"/><path d="M71.500 3.200l5.600 4.600-1.300 1-5.300-4.200zM71.500 35.800l5.600-4.600-1.300-1-5.300 4.200z" fill="#e6e2dc" opacity=".5"/><path d="M8 4.800H51C60 4.800 66.500 10 66.500 19.500S60 34.200 51 34.200H8C4.500 34.200 3 29 3 19.500S4.500 4.800 8 4.800z" fill="#24262a"/><path d="M50 6.300C57 7 63.300 12 64 19.500 63.300 27 57 32 50 32.700z" fill="#5d5e61"/><path d="M16 4.900H49.500L51 6.500H14z" fill="#6a707a" opacity=".75"/><path d="M12.500 6.400H48C50 6.400 51 7.500 51.200 10 52 16 52 23 51.200 29 51 31.500 50 32.600 48 32.600H12.500C10 32.600 8.800 28 8.800 19.500S10 6.400 12.500 6.400z" fill="url(#grr)"/><path d="M50.200 1.200L48.400-2.600l2 .4 3.200 3.800z" fill="#b3181f"/><path d="M50.200 37.800l-1.200 2.200 2.200-.3 1.800-1.900z" fill="#b3181f"/><path d="M68 5.500C75 8.500 79 13.500 79.500 19.500" fill="none" stroke="#fff" stroke-opacity=".16" stroke-width="2.200"/></g><text x="1137.3" y="456.5" font-size="14.3" textLength="39.1" lengthAdjust="spacingAndGlyphs" fill="#1d1d1d">80km/h</text><g transform="translate(1186.8 433.7)"><path d="M6 5H62C75 5 83 12 83 22S75 42.500 62 42.500H6C2.500 42.500 1.500 39 1.500 36V10C1.500 7 2.500 5 6 5z" fill="#000" opacity=".42" filter="url(#sh)"/><path d="M7 .5H63C75 .5 82 6.500 82 15.500V23.500C82 32.500 75 38.500 63 38.500H7C3 38.500 .5 35.500 .5 32V7C.5 3.500 3 .5 7 .5z" fill="url(#gb)"/><path d="M.8 3.200l2.200-1.600 1 3.400-2.400 1.500zM.8 35.800l2.200 1.600 1-3.400-2.400-1.500z" fill="#e85045"/><path d="M71.500 3.200l5.600 4.600-1.300 1-5.300-4.200zM71.500 35.800l5.600-4.600-1.300-1-5.300 4.200z" fill="#e6e2dc" opacity=".5"/><path d="M8 4.800H51C60 4.800 66.500 10 66.500 19.500S60 34.200 51 34.200H8C4.500 34.200 3 29 3 19.500S4.500 4.800 8 4.800z" fill="#24262a"/><path d="M50 6.300C57 7 63.300 12 64 19.500 63.300 27 57 32 50 32.700z" fill="#5d5e61"/><path d="M16 4.900H49.500L51 6.500H14z" fill="#6a707a" opacity=".75"/><path d="M12.500 6.400H48C50 6.400 51 7.500 51.200 10 52 16 52 23 51.200 29 51 31.500 50 32.600 48 32.600H12.500C10 32.600 8.800 28 8.800 19.500S10 6.400 12.500 6.400z" fill="url(#gbr)"/><path d="M50.200 1.200L48.400-2.600l2 .4 3.200 3.800z" fill="#124f92"/><path d="M50.200 37.800l-1.200 2.200 2.200-.3 1.800-1.900z" fill="#124f92"/><path d="M68 5.500C75 8.500 79 13.500 79.500 19.500" fill="none" stroke="#fff" stroke-opacity=".16" stroke-width="2.200"/></g></svg>
<div class="abs" style="left:415px;top:530px;width:1160.5px;height:300px;background:#fde8cf;"></div>
<div class="abs" style="left:420px;top:535px;width:2.4px;height:2.4px;background:#b3a88f;border-radius:.8px"></div>
<div class="abs" style="left:424px;top:535px;width:2.4px;height:2.4px;background:#b3a88f;border-radius:.8px"></div>
<div class="abs" style="left:420px;top:539px;width:2.4px;height:2.4px;background:#b3a88f;border-radius:.8px"></div>
<div class="abs" style="left:424px;top:539px;width:2.4px;height:2.4px;background:#b3a88f;border-radius:.8px"></div>
<div class="abs" style="left:420px;top:544px;width:2.4px;height:2.4px;background:#b3a88f;border-radius:.8px"></div>
<div class="abs" style="left:424px;top:544px;width:2.4px;height:2.4px;background:#b3a88f;border-radius:.8px"></div>
<div class="abs" style="left:420px;top:548px;width:2.4px;height:2.4px;background:#b3a88f;border-radius:.8px"></div>
<div class="abs" style="left:424px;top:548px;width:2.4px;height:2.4px;background:#b3a88f;border-radius:.8px"></div>
<div class="abs" style="left:420px;top:553px;width:2.4px;height:2.4px;background:#b3a88f;border-radius:.8px"></div>
<div class="abs" style="left:424px;top:553px;width:2.4px;height:2.4px;background:#b3a88f;border-radius:.8px"></div>
<div class="abs" style="left:420px;top:557px;width:2.4px;height:2.4px;background:#b3a88f;border-radius:.8px"></div>
<div class="abs" style="left:424px;top:557px;width:2.4px;height:2.4px;background:#b3a88f;border-radius:.8px"></div>
<div class="abs" style="left:434.300px;top:538.2px;width:16.800px;height:16.800px;background:#fff;border:1.200px solid #d0d0d0"></div>
<svg class="abs" style="left:436px;top:539.8px" width="14" height="14" viewBox="0 0 14 14"><path d="M2.800 7l2.900 2.900 5.200-6" fill="none" stroke="#2a90cc" stroke-width="1.900"/></svg>
<svg class="abs" style="left:483.4px;top:536.6px" width="24" height="18" viewBox="0 0 24 18"><path d="M2.200 3.700V1.100h5.800v2.600" fill="none" stroke="#5a524a" stroke-width="1.350"/><path d="M3.900 2.600h2.400" stroke="#5a524a" stroke-width="1.100"/><path d="M1.700 3.700h8.200l1.800 1.800v10.300H1.700z" fill="none" stroke="#5a524a" stroke-width="1.350"/><path d="M3.700 7.300h6M3.700 9.900h6M3.700 12.500h6" stroke="#5a524a" stroke-width="1.250"/><path d="M15.200 8.300h5.800l-2.900 3.100z" fill="#2b2b2b"/></svg>
<div class="t" style="left:520.80px;top:538px;font-size:13.6px;letter-spacing:0.095px;color:#2b6fd0;">18097</div>
<div class="t" style="left:616.30px;top:538px;font-size:14.7px;letter-spacing:-.02px;color:#0b0b0b;-webkit-text-stroke:.18px #0b0b0b">The software shall accelerate the vehicle as needed to maintain vehicle speed by increasing the</div>
<div class="t" style="left:616.30px;top:556px;font-size:14.7px;letter-spacing:-.02px;color:#0b0b0b;-webkit-text-stroke:.18px #0b0b0b">commanded engine output sent to the Engine Control Module.</div>
<div class="t" style="left:1328.40px;top:538px;font-size:13.4px;letter-spacing:-0.063px;color:#1a1a1a;">8.0</div>
<div class="t" style="left:1433.80px;top:537px;font-size:13.4px;letter-spacing:-0.064px;color:#1a1a1a;">Unclear term</div>
<div class="abs" style="left:415px;top:587.7px;width:1160.5px;height:1.2px;background:#f6eadb;"></div>
<div class="abs" style="left:420px;top:593px;width:2.4px;height:2.4px;background:#b3a88f;border-radius:.8px"></div>
<div class="abs" style="left:424px;top:593px;width:2.4px;height:2.4px;background:#b3a88f;border-radius:.8px"></div>
<div class="abs" style="left:420px;top:598px;width:2.4px;height:2.4px;background:#b3a88f;border-radius:.8px"></div>
<div class="abs" style="left:424px;top:598px;width:2.4px;height:2.4px;background:#b3a88f;border-radius:.8px"></div>
<div class="abs" style="left:420px;top:602px;width:2.4px;height:2.4px;background:#b3a88f;border-radius:.8px"></div>
<div class="abs" style="left:424px;top:602px;width:2.4px;height:2.4px;background:#b3a88f;border-radius:.8px"></div>
<div class="abs" style="left:420px;top:606px;width:2.4px;height:2.4px;background:#b3a88f;border-radius:.8px"></div>
<div class="abs" style="left:424px;top:606px;width:2.4px;height:2.4px;background:#b3a88f;border-radius:.8px"></div>
<div class="abs" style="left:420px;top:611px;width:2.4px;height:2.4px;background:#b3a88f;border-radius:.8px"></div>
<div class="abs" style="left:424px;top:611px;width:2.4px;height:2.4px;background:#b3a88f;border-radius:.8px"></div>
<div class="abs" style="left:420px;top:615px;width:2.4px;height:2.4px;background:#b3a88f;border-radius:.8px"></div>
<div class="abs" style="left:424px;top:615px;width:2.4px;height:2.4px;background:#b3a88f;border-radius:.8px"></div>
<div class="abs" style="left:434.300px;top:596.5px;width:16.800px;height:16.800px;background:#fff;border:1.200px solid #d0d0d0"></div>
<svg class="abs" style="left:436px;top:598.1px" width="14" height="14" viewBox="0 0 14 14"><path d="M2.800 7l2.900 2.900 5.200-6" fill="none" stroke="#2a90cc" stroke-width="1.900"/></svg>
<svg class="abs" style="left:483.4px;top:594.9px" width="24" height="18" viewBox="0 0 24 18"><path d="M2.200 3.700V1.100h5.800v2.600" fill="none" stroke="#5a524a" stroke-width="1.350"/><path d="M3.900 2.600h2.400" stroke="#5a524a" stroke-width="1.100"/><path d="M1.700 3.700h8.200l1.800 1.800v10.300H1.700z" fill="none" stroke="#5a524a" stroke-width="1.350"/><path d="M3.700 7.300h6M3.700 9.900h6M3.700 12.500h6" stroke="#5a524a" stroke-width="1.250"/><path d="M15.200 8.300h5.800l-2.900 3.100z" fill="#2b2b2b"/></svg>
<div class="t" style="left:520.80px;top:596px;font-size:13.6px;letter-spacing:0.095px;color:#2b6fd0;">18098</div>
<div class="t" style="left:616.30px;top:596px;font-size:14.7px;letter-spacing:-.02px;color:#0b0b0b;-webkit-text-stroke:.18px #0b0b0b">The software shall assign the VSS to the current vehicle speed when the software is either in Standby or</div>
<div class="t" style="left:616.30px;top:614px;font-size:14.7px;letter-spacing:-.02px;color:#0b0b0b;-webkit-text-stroke:.18px #0b0b0b">Active modes and the Set button is pressed, provided that this speed is between MinSS and MaxSS,</div>
<div class="t" style="left:616.30px;top:632px;font-size:14.7px;letter-spacing:-.02px;color:#0b0b0b;-webkit-text-stroke:.18px #0b0b0b">inclusive.</div>
<div class="t" style="left:1328.40px;top:596px;font-size:13.4px;letter-spacing:-0.063px;color:#1a1a1a;">9.0</div>
<div class="t" style="left:1433.80px;top:596px;font-size:13.4px;letter-spacing:-0.352px;color:#1a1a1a;">Passive voice</div>
<div class="abs" style="left:415px;top:650px;width:1160.5px;height:1.2px;background:#f6eadb;"></div>
<div class="abs" style="left:420px;top:656px;width:2.4px;height:2.4px;background:#b3a88f;border-radius:.8px"></div>
<div class="abs" style="left:424px;top:656px;width:2.4px;height:2.4px;background:#b3a88f;border-radius:.8px"></div>
<div class="abs" style="left:420px;top:660px;width:2.4px;height:2.4px;background:#b3a88f;border-radius:.8px"></div>
<div class="abs" style="left:424px;top:660px;width:2.4px;height:2.4px;background:#b3a88f;border-radius:.8px"></div>
<div class="abs" style="left:420px;top:664px;width:2.4px;height:2.4px;background:#b3a88f;border-radius:.8px"></div>
<div class="abs" style="left:424px;top:664px;width:2.4px;height:2.4px;background:#b3a88f;border-radius:.8px"></div>
<div class="abs" style="left:420px;top:669px;width:2.4px;height:2.4px;background:#b3a88f;border-radius:.8px"></div>
<div class="abs" style="left:424px;top:669px;width:2.4px;height:2.4px;background:#b3a88f;border-radius:.8px"></div>
<div class="abs" style="left:420px;top:673px;width:2.4px;height:2.4px;background:#b3a88f;border-radius:.8px"></div>
<div class="abs" style="left:424px;top:673px;width:2.4px;height:2.4px;background:#b3a88f;border-radius:.8px"></div>
<div class="abs" style="left:420px;top:678px;width:2.4px;height:2.4px;background:#b3a88f;border-radius:.8px"></div>
<div class="abs" style="left:424px;top:678px;width:2.4px;height:2.4px;background:#b3a88f;border-radius:.8px"></div>
<div class="abs" style="left:434.300px;top:658.8px;width:16.800px;height:16.800px;background:#fff;border:1.200px solid #d0d0d0"></div>
<svg class="abs" style="left:436px;top:660.4px" width="14" height="14" viewBox="0 0 14 14"><path d="M2.800 7l2.900 2.900 5.200-6" fill="none" stroke="#2a90cc" stroke-width="1.900"/></svg>
<svg class="abs" style="left:483.4px;top:657.2px" width="24" height="18" viewBox="0 0 24 18"><path d="M2.200 3.700V1.100h5.800v2.600" fill="none" stroke="#5a524a" stroke-width="1.350"/><path d="M3.900 2.600h2.400" stroke="#5a524a" stroke-width="1.100"/><path d="M1.700 3.700h8.200l1.800 1.800v10.300H1.700z" fill="none" stroke="#5a524a" stroke-width="1.350"/><path d="M3.700 7.300h6M3.700 9.900h6M3.700 12.500h6" stroke="#5a524a" stroke-width="1.250"/><path d="M15.200 8.300h5.800l-2.900 3.100z" fill="#2b2b2b"/></svg>
<div class="t" style="left:520.80px;top:659px;font-size:13.6px;letter-spacing:0.095px;color:#2b6fd0;">18099</div>
<div class="t" style="left:616.30px;top:659px;font-size:14.7px;letter-spacing:-.02px;color:#0b0b0b;-webkit-text-stroke:.18px #0b0b0b">The software shall set the control speed to a value supplied by the user</div>
<div class="t" style="left:1328.40px;top:659px;font-size:13.4px;letter-spacing:-0.063px;color:#1a1a1a;">9.0</div>
<div class="t" style="left:1433.80px;top:658px;font-size:13.4px;letter-spacing:-0.352px;color:#1a1a1a;">Passive voice</div>
<div class="abs" style="left:415px;top:708.8px;width:1160.5px;height:1.2px;background:#f6eadb;"></div>
<div class="abs" style="left:420px;top:714px;width:2.4px;height:2.4px;background:#b3a88f;border-radius:.8px"></div>
<div class="abs" style="left:424px;top:714px;width:2.4px;height:2.4px;background:#b3a88f;border-radius:.8px"></div>
<div class="abs" style="left:420px;top:719px;width:2.4px;height:2.4px;background:#b3a88f;border-radius:.8px"></div>
<div class="abs" style="left:424px;top:719px;width:2.4px;height:2.4px;background:#b3a88f;border-radius:.8px"></div>
<div class="abs" style="left:420px;top:723px;width:2.4px;height:2.4px;background:#b3a88f;border-radius:.8px"></div>
<div class="abs" style="left:424px;top:723px;width:2.4px;height:2.4px;background:#b3a88f;border-radius:.8px"></div>
<div class="abs" style="left:420px;top:728px;width:2.4px;height:2.4px;background:#b3a88f;border-radius:.8px"></div>
<div class="abs" style="left:424px;top:728px;width:2.4px;height:2.4px;background:#b3a88f;border-radius:.8px"></div>
<div class="abs" style="left:420px;top:732px;width:2.4px;height:2.4px;background:#b3a88f;border-radius:.8px"></div>
<div class="abs" style="left:424px;top:732px;width:2.4px;height:2.4px;background:#b3a88f;border-radius:.8px"></div>
<div class="abs" style="left:420px;top:736px;width:2.4px;height:2.4px;background:#b3a88f;border-radius:.8px"></div>
<div class="abs" style="left:424px;top:736px;width:2.4px;height:2.4px;background:#b3a88f;border-radius:.8px"></div>
<div class="abs" style="left:434.300px;top:717.6px;width:16.800px;height:16.800px;background:#fff;border:1.200px solid #d0d0d0"></div>
<svg class="abs" style="left:436px;top:719.2px" width="14" height="14" viewBox="0 0 14 14"><path d="M2.800 7l2.900 2.900 5.200-6" fill="none" stroke="#2a90cc" stroke-width="1.900"/></svg>
<svg class="abs" style="left:483.4px;top:716px" width="24" height="18" viewBox="0 0 24 18"><path d="M2.200 3.700V1.100h5.800v2.600" fill="none" stroke="#5a524a" stroke-width="1.350"/><path d="M3.900 2.600h2.400" stroke="#5a524a" stroke-width="1.100"/><path d="M1.700 3.700h8.200l1.800 1.800v10.300H1.700z" fill="none" stroke="#5a524a" stroke-width="1.350"/><path d="M3.700 7.300h6M3.700 9.900h6M3.700 12.500h6" stroke="#5a524a" stroke-width="1.250"/><path d="M15.200 8.300h5.800l-2.900 3.100z" fill="#2b2b2b"/></svg>
<div class="t" style="left:520.80px;top:717px;font-size:13.6px;letter-spacing:0.095px;color:#2b6fd0;">18100</div>
<div class="t" style="left:616.30px;top:717px;font-size:14.7px;letter-spacing:-.02px;color:#0b0b0b;-webkit-text-stroke:.18px #0b0b0b">The software shall  attempt to reduce vehicle speed by lessening engine output if it is in Active mode and t</div>
<div class="t" style="left:616.30px;top:735px;font-size:14.7px;letter-spacing:-.02px;color:#0b0b0b;-webkit-text-stroke:.18px #0b0b0b">he gas pedal is not depressed.</div>
<div class="t" style="left:1328.40px;top:717px;font-size:13.4px;letter-spacing:-0.063px;color:#1a1a1a;">5.0</div>
<div class="t" style="left:1433.80px;top:717px;font-size:13.4px;letter-spacing:0.056px;color:#1a1a1a;">Imprecise verb</div>
<div class="t" style="left:1433.80px;top:734px;font-size:13.4px;letter-spacing:-0.064px;color:#1a1a1a;">Unclear term</div>
<div class="t" style="left:1433.80px;top:752px;font-size:13.4px;letter-spacing:-0.352px;color:#1a1a1a;">Passive voice</div>
<div class="t" style="left:1433.80px;top:770px;font-size:13.4px;letter-spacing:-0.084px;color:#1a1a1a;">Unclear pronoun</div>
<div class="abs" style="left:415px;top:785.4px;width:1160.5px;height:1.2px;background:#f6eadb;"></div>
<div class="abs" style="left:420px;top:791px;width:2.4px;height:2.4px;background:#b3a88f;border-radius:.8px"></div>
<div class="abs" style="left:424px;top:791px;width:2.4px;height:2.4px;background:#b3a88f;border-radius:.8px"></div>
<div class="abs" style="left:420px;top:795px;width:2.4px;height:2.4px;background:#b3a88f;border-radius:.8px"></div>
<div class="abs" style="left:424px;top:795px;width:2.4px;height:2.4px;background:#b3a88f;border-radius:.8px"></div>
<div class="abs" style="left:420px;top:800px;width:2.4px;height:2.4px;background:#b3a88f;border-radius:.8px"></div>
<div class="abs" style="left:424px;top:800px;width:2.4px;height:2.4px;background:#b3a88f;border-radius:.8px"></div>
<div class="abs" style="left:420px;top:804px;width:2.4px;height:2.4px;background:#b3a88f;border-radius:.8px"></div>
<div class="abs" style="left:424px;top:804px;width:2.4px;height:2.4px;background:#b3a88f;border-radius:.8px"></div>
<div class="abs" style="left:420px;top:809px;width:2.4px;height:2.4px;background:#b3a88f;border-radius:.8px"></div>
<div class="abs" style="left:424px;top:809px;width:2.4px;height:2.4px;background:#b3a88f;border-radius:.8px"></div>
<div class="abs" style="left:420px;top:813px;width:2.4px;height:2.4px;background:#b3a88f;border-radius:.8px"></div>
<div class="abs" style="left:424px;top:813px;width:2.4px;height:2.4px;background:#b3a88f;border-radius:.8px"></div>
<div class="abs" style="left:434.300px;top:794.2px;width:16.800px;height:16.800px;background:#fff;border:1.200px solid #d0d0d0"></div>
<svg class="abs" style="left:436px;top:795.8px" width="14" height="14" viewBox="0 0 14 14"><path d="M2.800 7l2.900 2.900 5.200-6" fill="none" stroke="#2a90cc" stroke-width="1.900"/></svg>
<svg class="abs" style="left:483.4px;top:792.6px" width="24" height="18" viewBox="0 0 24 18"><path d="M2.200 3.700V1.100h5.800v2.600" fill="none" stroke="#5a524a" stroke-width="1.350"/><path d="M3.900 2.600h2.400" stroke="#5a524a" stroke-width="1.100"/><path d="M1.700 3.700h8.200l1.800 1.800v10.300H1.700z" fill="none" stroke="#5a524a" stroke-width="1.350"/><path d="M3.700 7.300h6M3.700 9.900h6M3.700 12.500h6" stroke="#5a524a" stroke-width="1.250"/><path d="M15.200 8.300h5.800l-2.900 3.100z" fill="#2b2b2b"/></svg>
<div class="t" style="left:520.80px;top:793px;font-size:13.6px;letter-spacing:0.095px;color:#2b6fd0;">18101</div>
<div class="t" style="left:616.30px;top:793px;font-size:14.7px;letter-spacing:-.02px;color:#0b0b0b;-webkit-text-stroke:.18px #0b0b0b">The software shall not attempt to reduce vehicle speed by lessening engine output if the gas pedal is</div>
<div class="t" style="left:616.30px;top:811px;font-size:14.7px;letter-spacing:-.02px;color:#0b0b0b;-webkit-text-stroke:.18px #0b0b0b">depressed.</div>
<div class="t" style="left:1328.40px;top:793px;font-size:13.4px;letter-spacing:-0.063px;color:#1a1a1a;">8.0</div>
<div class="t" style="left:1433.80px;top:792px;font-size:13.4px;letter-spacing:-0.015px;color:#1a1a1a;">Negative statement</div>
<div class="abs" style="left:414px;top:830px;width:1161.5px;height:21px;background:#e4e4e4;"></div>
<div class="t" style="left:427.00px;top:835px;font-size:12.3px;letter-spacing:-0.129px;color:#666869;">Showing 49 of 49 (100%)</div>
<div class="t" style="left:1398.90px;top:835px;font-size:12.3px;letter-spacing:-0.175px;color:#666869;">6 selected</div>
<div class="t" style="left:1457.20px;top:835px;font-size:12.3px;letter-spacing:-0.209px;color:#2b6fd0;">(Clear All Selected)</div>
<div class="abs" style="left:404px;top:852.6px;width:1180px;height:38.4px;background:#f5f5f5;border-top:1.400px solid #e4e4e4"></div>
<div class="abs" style="left:411px;top:861px;width:48px;height:24px;overflow:hidden"><div class="t" style="left:1.6px;top:-1px;font-family:'Liberation Serif',serif;font-weight:bold;font-size:24px;letter-spacing:-.6px;color:#48494b;-webkit-text-stroke:.8px #48494b;transform:scaleX(.87);transform-origin:0 0">IBM</div><div class="abs" style="left:0;top:0;width:43px;height:24px;background:repeating-linear-gradient(rgba(245,245,245,0) 0,rgba(245,245,245,0) 1.400px,rgba(245,245,245,.8) 1.400px,rgba(245,245,245,.8) 2px);background-position:0 3.400px"></div></div>
<div class="abs" style="left:455px;top:878.3px;width:1.8px;height:1.8px;background:#58595b;"></div>
<svg class="abs" style="left:1508px;top:854px" width="72" height="37" viewBox="0 0 72 37"><text x="0" y="0" font-family="Liberation Sans,sans-serif" font-style="italic" font-weight="bold" font-size="12.500" fill="#0c0c0c" transform="translate(22.800 24.500) rotate(-12) skewX(-10) scale(1.450 1)">jazz</text><path d="M25 10.500C24.500 16 23 23 17.500 29.500 13 34.500 7 34.500 7.200 31 7.500 27.500 14 22.500 22 19.500" fill="none" stroke="#0c0c0c" stroke-width="1.900" stroke-linecap="round"/><path d="M49 19.500c6-2.300 12-3.400 18.500-3.300" fill="none" stroke="#0c0c0c" stroke-width="2" stroke-linecap="round"/><circle cx="24" cy="5.200" r="1.150" fill="#e58a5c"/></svg>
</body>
</html>
